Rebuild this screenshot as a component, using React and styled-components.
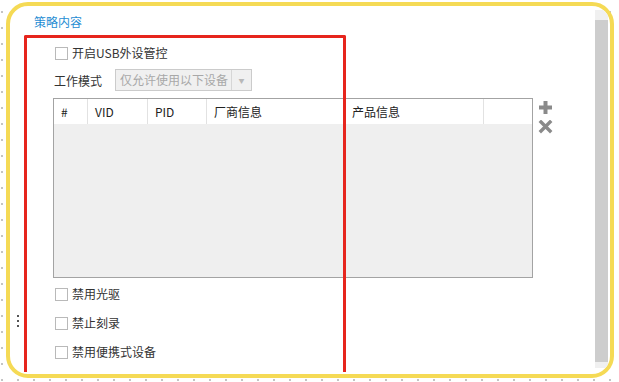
import React from 'react';
import styled, { createGlobalStyle } from 'styled-components';

const Global = createGlobalStyle`
  html, body {
    margin: 0;
    padding: 0;
    background: #fff;
  }
  body {
    font-family: 'Noto Sans CJK SC', 'Noto Sans', sans-serif;
    font-size: 12px;
    color: #333;
  }
`;

const Page = styled.div`
  width: 619px;
  height: 382px;
  box-sizing: border-box;
  padding: 2px 5px 4px 6px;
  background-color: #fff;
  background-image: radial-gradient(circle, #c4c4c4 0.9px, transparent 1.1px);
  background-size: 16px 16px;
  background-position: -6px 372px;
  overflow: hidden;
`;

const Frame = styled.div`
  position: relative;
  height: 100%;
  box-sizing: border-box;
  border: 4px solid #f5da55;
  border-radius: 22px;
  background: #fff;
  overflow: hidden;
  display: flex;
`;

const Content = styled.div`
  flex: 1;
  padding: 8px 0 0 24px;
  display: flex;
  flex-direction: column;
`;

const Title = styled.div`
  color: #1f8dd3;
  font-size: 12px;
  line-height: 16px;
`;

const Form = styled.div`
  padding-left: 20px;
  display: flex;
  flex-direction: column;
`;

const CheckRow = styled.label`
  display: flex;
  align-items: center;
  height: 20px;
  gap: 4px;
  margin-top: ${p => p.$top}px;
  padding-left: 1px;
  color: #333;
  line-height: 20px;
`;

const Box = styled.span`
  width: 11px;
  height: 11px;
  border: 1px solid #b9b9b9;
  background: #fff;
  flex-shrink: 0;
`;

const ModeRow = styled.div`
  display: flex;
  align-items: center;
  gap: 13px;
  margin-top: 6px;
`;

const Select = styled.div`
  width: 137px;
  height: 22px;
  box-sizing: border-box;
  border: 1px solid #cbcbcb;
  background: #f0f0f0;
  display: flex;
  color: #a8a8a8;
`;

const SelectText = styled.span`
  flex: 1;
  padding-left: 4px;
  line-height: 20px;
  white-space: nowrap;
`;

const SelectArrow = styled.span`
  width: 19px;
  border-left: 1px solid #d6d6d6;
  display: flex;
  align-items: center;
  justify-content: center;
  font-size: 6px;
  color: #b8b8b8;
`;

const TableRow = styled.div`
  display: flex;
  gap: 5px;
  margin-top: 7px;
  margin-left: -1px;
`;

const Table = styled.div`
  width: 480px;
  height: 180px;
  box-sizing: border-box;
  border: 1px solid #a3a3a3;
  background: #efefef;
  display: flex;
  flex-direction: column;
`;

const Header = styled.div`
  display: flex;
  height: 25px;
  background: #fff;
`;

const HeadCell = styled.div`
  width: ${p => p.$w}px;
  flex: ${p => (p.$w ? 'none' : 1)};
  box-sizing: border-box;
  padding-left: 7px;
  line-height: 25px;
  border-right: ${p => (p.$last ? 'none' : '1px solid #e2e2e2')};
  color: #222;
`;

const Tools = styled.div`
  display: flex;
  flex-direction: column;
  gap: 5px;
  padding-top: 2px;
`;

const Scroll = styled.div`
  width: 13px;
  margin: 4px 2px 6px 0;
  display: flex;
  flex-direction: column;
`;

const ScrollCap = styled.div`
  height: ${p => p.$h}px;
  background: #f0f0f0;
`;

const Thumb = styled.div`
  flex: 1;
  background: #cdcdcd;
`;

const RedMark = styled.div`
  position: absolute;
  left: 14px;
  top: 29px;
  width: 322px;
  height: 337px;
  box-sizing: border-box;
  border: 3px solid #e6251d;
  border-bottom: none;
  border-radius: 2px 2px 0 0;
  pointer-events: none;
`;

const Grip = styled.div`
  position: absolute;
  left: 7px;
  top: 309px;
  display: flex;
  flex-direction: column;
  gap: 3px;
  span {
    width: 2px;
    height: 2px;
    background: #555;
  }
`;

const PlusIcon = () => (
  <svg width="15" height="15" viewBox="0 0 15 15">
    <path d="M5.5 1h4v4.5H14v4H9.5V14h-4V9.5H1v-4h4.5z" fill="#8a8a8a" />
  </svg>
);

const CrossIcon = () => (
  <svg width="15" height="14" viewBox="0 0 15 14">
    <path d="M3 2l9 9M12 2l-9 9" stroke="#8a8a8a" strokeWidth="3.4" strokeLinecap="square" />
  </svg>
);

const columns = [
  { label: '#', w: 34 },
  { label: 'VID', w: 60 },
  { label: 'PID', w: 59 },
  { label: '厂商信息', w: 138 },
  { label: '产品信息', w: 139 },
  { label: '', last: true },
];

const Check = ({ top, children }) => (
  <CheckRow $top={top}>
    <Box />
    {children}
  </CheckRow>
);

export default function App() {
  return (
    <Page>
      <Global />
      <Frame>
        <Content>
          <Title>策略内容</Title>
          <Form>
            <Check top={13}>开启USB外设管控</Check>
            <ModeRow>
              <span>工作模式</span>
              <Select>
                <SelectText>仅允许使用以下设备</SelectText>
                <SelectArrow>▼</SelectArrow>
              </Select>
            </ModeRow>
            <TableRow>
              <Table>
                <Header>
                  {columns.map((c, i) => (
                    <HeadCell key={i} $w={c.w} $last={c.last}>{c.label}</HeadCell>
                  ))}
                </Header>
              </Table>
              <Tools>
                <PlusIcon />
                <CrossIcon />
              </Tools>
            </TableRow>
            <Check top={6}>禁用光驱</Check>
            <Check top={9}>禁止刻录</Check>
            <Check top={9}>禁用便携式设备</Check>
          </Form>
        </Content>
        <Scroll>
          <ScrollCap $h={10} />
          <Thumb />
          <ScrollCap $h={6} />
        </Scroll>
        <RedMark />
        <Grip>
          <span />
          <span />
          <span />
        </Grip>
      </Frame>
    </Page>
  );
}
